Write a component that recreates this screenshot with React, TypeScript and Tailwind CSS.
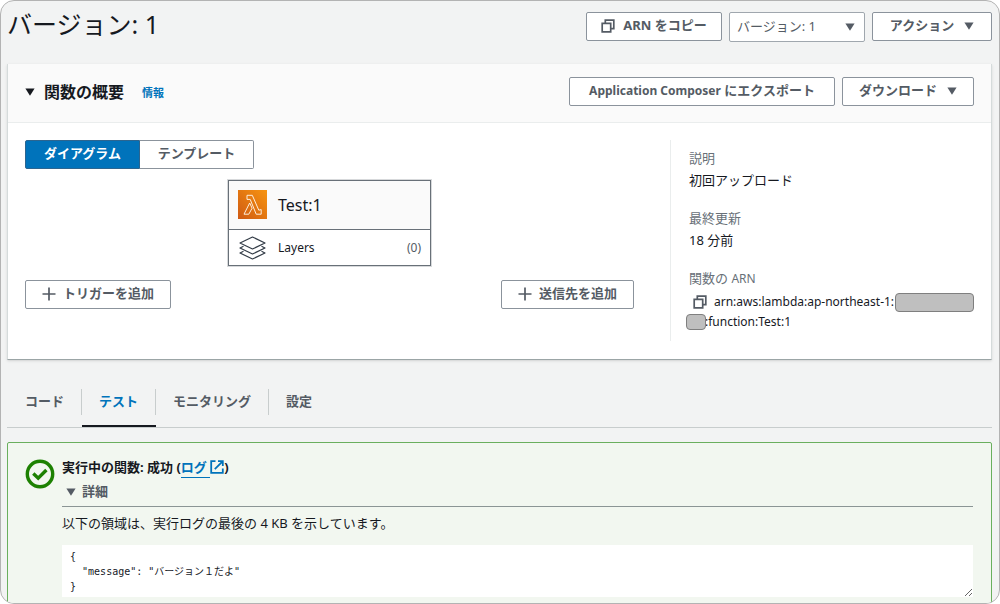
import { useState } from "react"
import type { ReactNode } from "react"
import clsx from "clsx"

const tabs = ["コード", "テスト", "モニタリング", "設定"]

const details = [
	{ label: "説明", value: "初回アップロード" },
	{ label: "最終更新", value: "18 分前" },
]

const Caret = ({ className }: { className?: string }) => (
	<svg
		className={clsx("h-2 w-[10px] shrink-0", className)}
		viewBox="0 0 10 8"
		fill="currentColor"
		aria-hidden="true"
	>
		<path d="M0.4 0.4h9.2L5 7.8z" />
	</svg>
)

const CopyIcon = () => (
	<svg
		className="h-[14px] w-[14px] shrink-0"
		viewBox="0 0 14 14"
		fill="none"
		stroke="currentColor"
		strokeWidth="1.7"
		aria-hidden="true"
	>
		<path d="M1.2 4.300h8.500v8.500H1.200z" />
		<path d="M4.300 4.300V1.200h8.500v8.500H9.700" />
	</svg>
)

const PlusIcon = () => (
	<svg
		className="h-[14px] w-[14px] shrink-0"
		viewBox="0 0 14 14"
		fill="none"
		stroke="currentColor"
		strokeWidth="1.7"
		aria-hidden="true"
	>
		<path d="M7 0.5v13M0.5 7h13" />
	</svg>
)

const LambdaIcon = () => (
	<svg className="h-[29px] w-[29px] shrink-0" viewBox="0 0 29 29" aria-hidden="true">
		<defs>
			<linearGradient id="lambda-bg" x1="0" y1="1" x2="1" y2="0">
				<stop offset="0" stopColor="#cf5a13" />
				<stop offset="1" stopColor="#f79410" />
			</linearGradient>
		</defs>
		<path d="M0 0h29v29H0z" fill="url(#lambda-bg)" />
		<g fill="none" stroke="#fdeedd" strokeWidth="1" strokeLinejoin="round">
			<path d="M9 5.3h5.3l6.5 14.900 2.400-.6v4.600h-5L12.200 9.400H9z" />
			<path d="M11.7 13l2.4 5.200-3.300 6H6z" />
		</g>
	</svg>
)

const LayersIcon = () => (
	<svg
		className="h-6 w-[29px] shrink-0"
		viewBox="0 0 29 24"
		fill="none"
		stroke="#343d48"
		strokeWidth="1.2"
		strokeLinejoin="round"
		aria-hidden="true"
	>
		<path d="M14.5 1L27 7l-12.5 6L2 7z" />
		<path d="M5.5 10.3L2 12l12.5 6L27 12l-3.5-1.7" />
		<path d="M5.5 15.3L2 17l12.5 6L27 17l-3.5-1.7" />
	</svg>
)

const SuccessIcon = () => (
	<svg
		className="h-[30px] w-[30px] shrink-0"
		viewBox="0 0 30 30"
		fill="none"
		stroke="#1d8102"
		strokeWidth="3.4"
		aria-hidden="true"
	>
		<circle cx="15" cy="15" r="12.7" />
		<path d="M8.3 14.5l4.9 4.7 8.2-8.2" />
	</svg>
)

const ExternalIcon = () => (
	<svg
		className="inline h-[14px] w-[14px] align-[-2px]"
		viewBox="0 0 14 14"
		fill="none"
		stroke="currentColor"
		strokeWidth="1.8"
		aria-hidden="true"
	>
		<path d="M5.5 1.2H1.2v11.600h11.600V8.500" />
		<path d="M8 1.200h4.800V6M12.600 1.400L4.800 9.200" />
	</svg>
)

const Button = ({
	children,
	className,
}: {
	children: ReactNode
	className?: string
}) => (
	<button
		type="button"
		className={clsx(
			"flex h-[29px] shrink-0 cursor-pointer items-center justify-center rounded-[2px] border border-[#8b939c] bg-white pb-px font-bold whitespace-nowrap text-[#545b64] hover:bg-gray-50",
			className
		)}
	>
		{children}
	</button>
)

const Overview = () => {
	const [view, setView] = useState("diagram")

	return (
		<section className="shrink-0 border-x border-b border-x-[#d5dbdb] border-b-[#9ba5a6] bg-white shadow-sm">
			<div className="flex h-[59px] items-center border-b border-[#eaeded] bg-[#fafafa] px-[17px] pb-[3px]">
				<h2 className="flex items-center gap-[9px] text-base font-bold">
					<Caret />
					関数の概要
				</h2>
				<a href="#info" className="mt-1 ml-[18px] text-[11px] font-bold text-[#0073bb]">
					情報
				</a>
				<div className="ml-auto flex gap-[7px]">
					<Button className="w-[266px]">
						<span>
							<span className="text-xs">Application Composer</span> にエクスポート
						</span>
					</Button>
					<Button className="w-[132px] gap-[10px]">
						ダウンロード
						<Caret />
					</Button>
				</div>
			</div>

			<div className="flex gap-9 px-[17px] pt-[17px] pb-[18px]">
				<div className="min-w-0 flex-1">
					<div className="flex font-bold">
						<button
							type="button"
							aria-pressed={view === "diagram"}
							onClick={() => setView("diagram")}
							className={clsx(
								"h-[29px] w-[115px] rounded-l-[2px] border pb-px",
								view === "diagram"
									? "border-[#2c6590] bg-[#0073bb] text-white"
									: "border-[#8b939c] text-[#545b64]"
							)}
						>
							ダイアグラム
						</button>
						<button
							type="button"
							aria-pressed={view === "template"}
							onClick={() => setView("template")}
							className={clsx(
								"h-[29px] w-[114px] rounded-r-[2px] border pb-px",
								view === "template"
									? "border-[#2c6590] bg-[#0073bb] text-white"
									: "border-l-0 border-[#8b939c] text-[#545b64]"
							)}
						>
							テンプレート
						</button>
					</div>

					<div className="mx-auto mt-[11px] w-[203px] border border-[#687078] outline outline-[#68707844]">
						<div className="flex h-12 items-center gap-[11px] bg-[#fafafa] pb-px pl-[9px] text-base">
							<LambdaIcon />
							Test:1
						</div>
						<div className="flex h-9 items-center gap-[11px] border-t border-[#687078] pr-[9px] pl-[9px] text-xs">
							<LayersIcon />
							Layers
							<span className="ml-auto text-[#545b64]">(0)</span>
						</div>
					</div>

					<div className="mt-[14px] flex justify-between">
						<Button className="w-[146px] gap-[7px]">
							<PlusIcon />
							トリガーを追加
						</Button>
						<Button className="w-[133px] gap-[7px]">
							<PlusIcon />
							送信先を追加
						</Button>
					</div>
				</div>

				<dl className="h-[201px] w-[304px] shrink-0 border-l border-[#eaeded] pt-[7px] pl-[18px] leading-[22px]">
					{details.map(item => (
						<div key={item.label} className="mb-4">
							<dt className="text-[#687078]">{item.label}</dt>
							<dd>{item.value}</dd>
						</div>
					))}
					<dt className="text-[#687078]">
						関数の <span className="text-xs">ARN</span>
					</dt>
					<dd className="pt-[3px] text-xs leading-5">
						<div className="relative flex items-center gap-[7px] pl-1">
							<button type="button" aria-label="ARN をコピー" className="text-[#545b64]">
								<CopyIcon />
							</button>
							arn:aws:lambda:ap-northeast-1:
							<span className="absolute right-0 h-[19px] w-[79px] rounded-[4px] border border-[#7f7f7f] bg-[#bfbfbf]" />
						</div>
						<div className="relative flex items-center pl-4">
							:function:Test:1
							<span className="absolute -left-[3px] h-4 w-5 rounded-[4px] border border-[#7f7f7f] bg-[#bfbfbf]" />
						</div>
					</dd>
				</dl>
			</div>
		</section>
	)
}

const Tabs = () => {
	const [active, setActive] = useState("テスト")

	return (
		<div
			role="tablist"
			className="mt-[15px] flex h-[53px] shrink-0 items-stretch border-b border-[#c8cdcd] font-bold"
		>
			{tabs.map(tab => (
				<button
					key={tab}
					type="button"
					role="tab"
					aria-selected={active === tab}
					onClick={() => setActive(tab)}
					className={clsx(
						"group flex cursor-pointer items-center border-b-2 pt-1",
						active === tab
							? "border-[#16191f] text-[#0073bb]"
							: "border-transparent text-[#545b64]"
					)}
				>
					<span className="flex h-[26px] items-center border-r border-[#c8cdcd] px-[17px] group-first:pl-[18px] group-last:border-r-0">
						{tab}
					</span>
				</button>
			))}
		</div>
	)
}

const ResultAlert = () => (
	<section
		role="status"
		className="mt-[14px] flex shrink-0 gap-[7px] rounded-[2px] border border-[#6aaf5e] bg-[#f2f7f0] pt-3 pr-[18px] pb-5 pl-[17px]"
	>
		<div className="pt-1">
			<SuccessIcon />
		</div>
		<div className="min-w-0 flex-1">
			<h3 className="leading-6 font-bold">
				実行中の関数: 成功 (
				<a href="#logs" className="text-[#0073bb]">
					<span className="border-b border-current pb-px">ログ </span>
					<ExternalIcon />
				</a>
				)
			</h3>
			<details open className="group">
				<summary className="flex h-7 cursor-pointer list-none items-center gap-[6px] border-b border-[#8b9595] pb-px pl-1 font-bold text-[#545b64]">
					<Caret className="-rotate-90 group-open:rotate-0" />
					詳細
				</summary>
				<p className="mt-[5px] leading-[22px]">
					以下の領域は、実行ログの最後の 4 KB を示しています。
				</p>
				<textarea
					readOnly
					aria-label="実行結果"
					rows={3}
					defaultValue={'{\n  "message": "バージョン１だよ"\n}'}
					className="mt-[11px] block h-[52px] w-full resize-y overflow-hidden bg-white px-2 py-1 font-['DejaVu_Sans_Mono','Noto_Sans_CJK_JP',monospace] text-[10px] leading-[15px]"
				/>
			</details>
		</div>
	</section>
)

const App = () => (
	<main className="flex h-screen flex-col overflow-hidden rounded-[14px] border border-[#b3b3b3] bg-[#f2f3f3] pr-[7px] pl-[6px] font-['Noto_Sans','Noto_Sans_CJK_JP',sans-serif] text-[13px] text-[#16191f]">
		<header className="mt-[10px] mb-[22px] flex h-[31px] shrink-0 items-center justify-between">
			<h1 className="pb-[5px] text-[25px] leading-[30px]">バージョン: 1</h1>
			<div className="flex items-center gap-[7px]">
				<Button className="w-[136px] gap-2">
					<CopyIcon />
					ARN をコピー
				</Button>
				<div className="relative text-[#545b64]">
					<select
						aria-label="バージョン"
						className="block h-[30px] w-[136px] appearance-none rounded-[2px] border border-[#a0a7ae] bg-white pl-[7px]"
					>
						<option>バージョン: 1</option>
					</select>
					<Caret className="pointer-events-none absolute top-[11px] right-[10px]" />
				</div>
				<Button className="w-[120px] gap-[10px]">
					アクション
					<Caret />
				</Button>
			</div>
		</header>
		<Overview />
		<Tabs />
		<ResultAlert />
	</main>
)

export default App
